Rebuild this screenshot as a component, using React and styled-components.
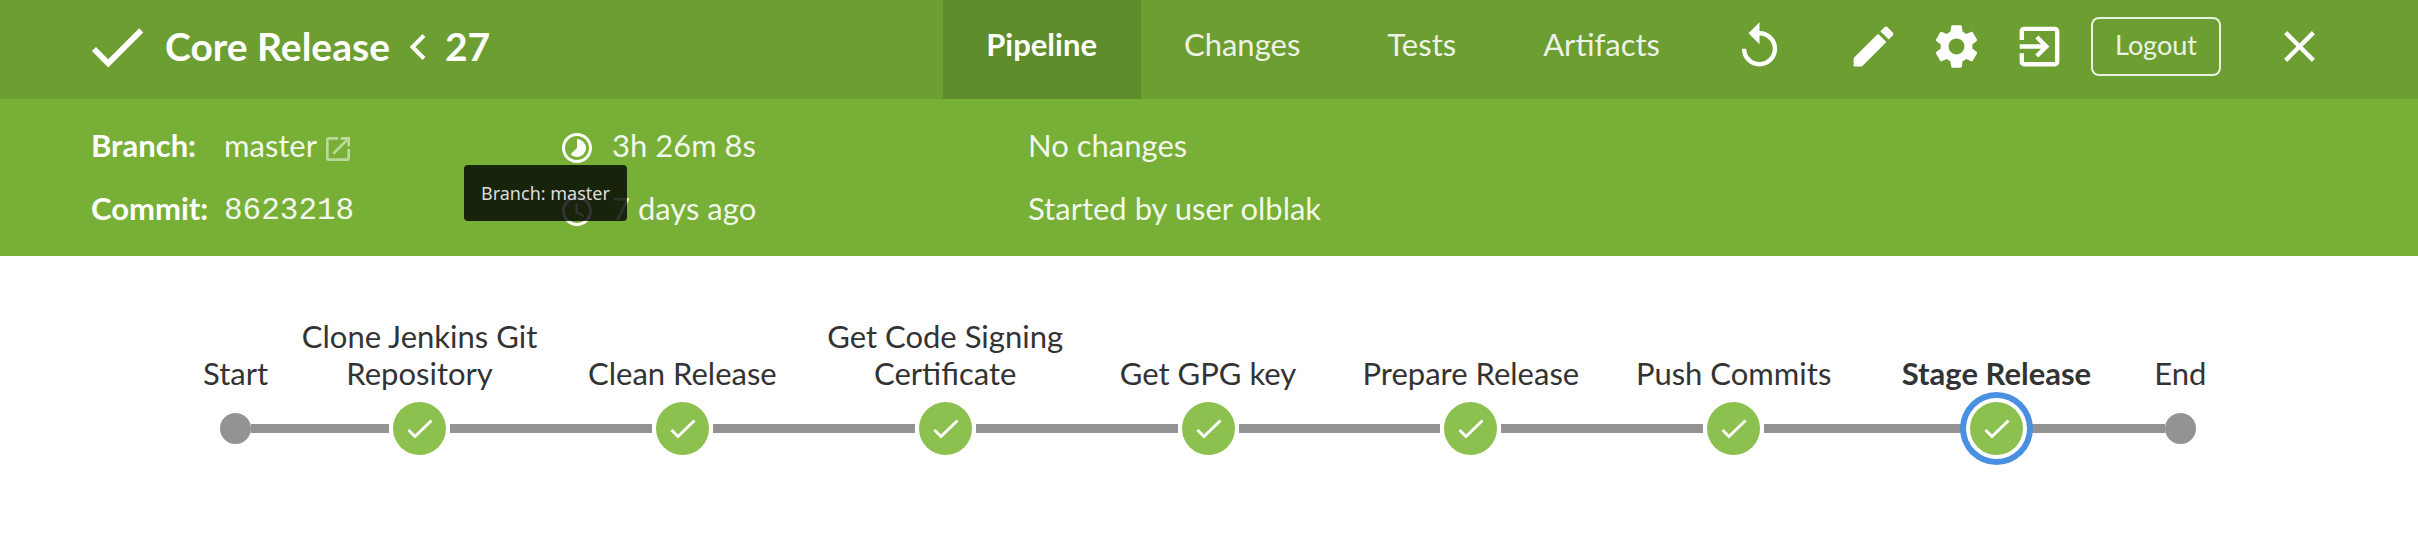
import styled, { createGlobalStyle, css } from "styled-components";
import {
  MdReplay,
  MdEdit,
  MdSettings,
  MdExitToApp,
  MdClose,
  MdDone,
  MdTimelapse,
  MdAccessTime,
  MdLaunch,
} from "react-icons/md";

const GlobalStyle = createGlobalStyle`
  *, *::before, *::after { box-sizing: border-box; }
  body {
    margin: 0;
    background: #fff;
    color: #333;
    font-family: Lato, "Open Sans", sans-serif;
    font-size: 31px;
    line-height: 37px;
  }
  button { font: inherit; color: inherit; background: none; border: 0; padding: 0; cursor: pointer; }
  a { color: inherit; text-decoration: none; }
  svg { display: block; flex: none; }
`;

const Header = styled.header`
  display: flex;
  min-height: 99px;
  padding: 0 92px 0 82px;
  background: #6c9e31;
  color: #fff;
`;

const HeaderGroup = styled.div`
  display: flex;
  align-items: center;
  padding-bottom: 6px;
`;

const Title = styled.h1`
  display: flex;
  align-items: center;
  gap: 19px;
  margin: 0 0 0 13px;
  font-size: 39px;
  line-height: 47px;
  font-weight: 700;
  white-space: nowrap;
`;

const Tabs = styled.nav`
  display: flex;
  margin: 0 29px 0 auto;
`;

const Tab = styled.a`
  display: flex;
  align-items: center;
  padding: 0 44px 11px 43px;
  color: rgba(255, 255, 255, 0.9);
  ${({ $active }) =>
    $active &&
    css`
      background: #5f8d2b;
      color: #fff;
      font-weight: 700;
    `}
`;

const Actions = styled.div`
  display: flex;
  gap: 30px;
  margin: 0 25px 0 61px;
`;

const LogoutButton = styled.button`
  height: 59px;
  margin-right: 52px;
  && {
    padding: 0 22px 4px;
    border: 2px solid rgba(255, 255, 255, 0.85);
    border-radius: 8px;
    color: rgba(255, 255, 255, 0.9);
    font-size: 27px;
  }
`;

const Details = styled.section`
  display: grid;
  grid-template-columns: 467px 470px 1fr;
  row-gap: 26px;
  padding: 28px 91px 29px;
  background: #78b037;
  color: rgba(255, 255, 255, 0.92);
`;

const Detail = styled.div`
  position: relative;
  display: flex;
  align-items: center;
  height: 37px;
  white-space: nowrap;
`;

const DetailLabel = styled.span`
  width: 133px;
  color: #fff;
  font-weight: 700;
`;

const DetailIcon = styled.span`
  display: flex;
  justify-content: center;
  width: 38px;
  margin-right: 16px;
  padding-top: 4px;
  color: #fff;
`;

const Hash = styled.code`
  font-family: "Liberation Mono", monospace;
  font-size: 31px;
`;

const BranchLink = styled.a`
  display: flex;
  align-items: center;
  gap: 5px;
`;

const LaunchIcon = styled.span`
  padding-top: 6px;
  opacity: 0.55;
`;

const Tooltip = styled.div`
  position: absolute;
  z-index: 2;
  top: 38px;
  left: 373px;
  padding: 10px 17px;
  border-radius: 4px;
  background: rgba(0, 0, 0, 0.8);
  color: #ddd;
  font-family: "Noto Sans", sans-serif;
  font-size: 18px;
  line-height: 36px;
`;

const Pipeline = styled.ol`
  display: grid;
  grid-template-columns: 2fr repeat(7, 5fr) 2fr;
  margin: 0;
  padding: 62px 185px 62px 183px;
  list-style: none;
`;

const Stage = styled.li`
  display: flex;
  flex-direction: column;
  justify-content: flex-end;
  gap: 10px;
  min-width: 0;
  text-align: center;
  font-weight: ${({ $selected }) => ($selected ? 700 : 400)};
`;

const Track = styled.div`
  display: flex;
  align-items: center;
  gap: ${({ $gap }) => $gap || 0}px;
  height: 53px;
`;

const Connector = styled.span`
  flex: 1;
  height: 9px;
  background: ${({ $hidden }) => ($hidden ? "transparent" : "#949393")};
`;

const Dot = styled.span`
  width: 31px;
  height: 31px;
  border-radius: 50%;
  background: #949393;
`;

const Node = styled.button`
  z-index: 1;
  width: 53px;
  height: 53px;
  border-radius: 50%;
  && {
    background: #8cc04f;
  }
  ${({ $selected }) =>
    $selected &&
    css`
      box-shadow: 0 0 0 4px #fff, 0 0 0 10px #4a90e2;
    `}
`;

const stages = [
  "Clone Jenkins Git Repository",
  "Clean Release",
  "Get Code Signing Certificate",
  "Get GPG key",
  "Prepare Release",
  "Push Commits",
  "Stage Release",
];
const selectedStage = "Stage Release";
const tabs = ["Pipeline", "Changes", "Tests", "Artifacts"];

function Chevron() {
  return (
    <svg width="17" height="26" viewBox="0 0 17 26" fill="none" stroke="#fff" strokeWidth="4" aria-hidden="true">
      <path d="M15 1.5 3.5 13 15 24.5" />
    </svg>
  );
}

function StageCheck() {
  return (
    <svg width="53" height="53" viewBox="0 0 53 53" fill="none" stroke="#fff" strokeWidth="3" aria-hidden="true">
      <path d="M15.5 28 22 34.5 38.5 18.5" />
    </svg>
  );
}

export default function App() {
  return (
    <>
      <GlobalStyle />
      <Header>
        <HeaderGroup>
          <MdDone size={70} aria-hidden="true" />
          <Title>
            <a href="#core-release">Core Release</a>
            <Chevron />
            <span>27</span>
          </Title>
        </HeaderGroup>
        <Tabs>
          {tabs.map((name) => (
            <Tab key={name} href={`#${name.toLowerCase()}`} $active={name === "Pipeline"}>
              {name}
            </Tab>
          ))}
        </Tabs>
        <HeaderGroup>
          <button aria-label="Rerun"><MdReplay size={53} /></button>
          <Actions>
            <button aria-label="Edit"><MdEdit size={53} /></button>
            <button aria-label="Settings"><MdSettings size={53} /></button>
            <button aria-label="Go to classic"><MdExitToApp size={53} /></button>
          </Actions>
          <LogoutButton>Logout</LogoutButton>
          <button aria-label="Close"><MdClose size={53} /></button>
        </HeaderGroup>
      </Header>

      <Details>
        <Detail>
          <DetailLabel>Branch:</DetailLabel>
          <BranchLink href="#master">
            master
            <LaunchIcon><MdLaunch size={32} /></LaunchIcon>
          </BranchLink>
          <Tooltip role="tooltip">Branch: master</Tooltip>
        </Detail>
        <Detail>
          <DetailIcon><MdTimelapse size={36} /></DetailIcon>
          3h 26m 8s
        </Detail>
        <Detail>No changes</Detail>
        <Detail>
          <DetailLabel>Commit:</DetailLabel>
          <a href="#8623218"><Hash>8623218</Hash></a>
        </Detail>
        <Detail>
          <DetailIcon><MdAccessTime size={36} /></DetailIcon>
          7 days ago
        </Detail>
        <Detail>Started by user olblak</Detail>
      </Details>

      <Pipeline>
        <Stage>
          Start
          <Track>
            <Connector $hidden />
            <Dot />
            <Connector />
          </Track>
        </Stage>
        {stages.map((name) => (
          <Stage key={name} $selected={name === selectedStage}>
            {name}
            <Track $gap={4}>
              <Connector />
              <Node aria-label={name} $selected={name === selectedStage}>
                <StageCheck />
              </Node>
              <Connector />
            </Track>
          </Stage>
        ))}
        <Stage>
          End
          <Track>
            <Connector />
            <Dot />
            <Connector $hidden />
          </Track>
        </Stage>
      </Pipeline>
    </>
  );
}
